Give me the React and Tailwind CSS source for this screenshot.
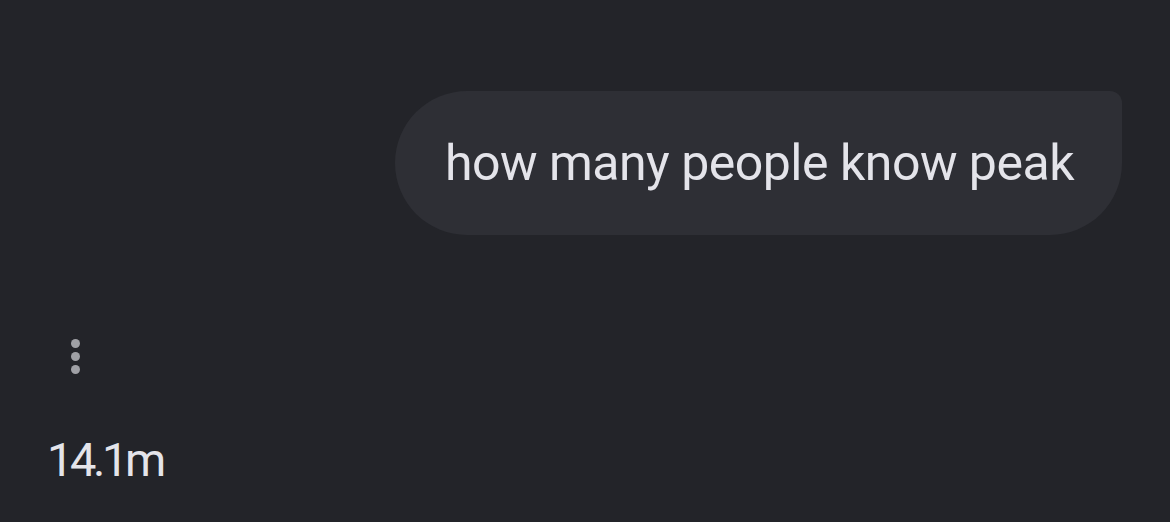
import React from "react";

export default function App() {
  return (
    <div className="w-[1170px] h-[522px] bg-[#232429] overflow-hidden font-['Roboto',sans-serif]">
      {/* user prompt */}
      <div className="flex justify-end pt-[91px] pr-[48px]">
        <div className="h-[144px] pl-[50px] pr-[48px] flex items-center bg-[#2e2f35] rounded-[72px] rounded-tr-[12px]">
          <span className="text-[50px] leading-none text-[#e4e4ea] tracking-[-0.5px]">how many people know peak</span>
        </div>
      </div>

      {/* more menu */}
      <div className="mt-[104px] ml-[69px] flex flex-col gap-[4px] w-[12px] items-center">
        <span className="w-[9px] h-[9px] rounded-full bg-[#9fa0a5]" />
        <span className="w-[9px] h-[9px] rounded-full bg-[#9fa0a5]" />
        <span className="w-[9px] h-[9px] rounded-full bg-[#9fa0a5]" />
      </div>

      <div className="mt-[62px] ml-[47px] text-[47px] leading-none text-[#e4e4ea] tracking-[-3.4px]">14.1m</div>
    </div>
  );
}
